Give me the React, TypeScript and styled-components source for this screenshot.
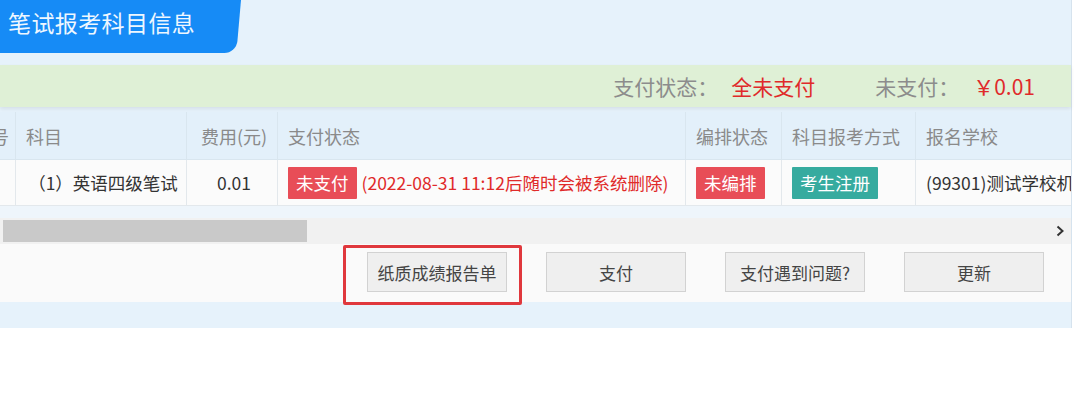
import React, { useLayoutEffect, useRef } from 'react';
import styled, { createGlobalStyle } from 'styled-components';

const GlobalStyle = createGlobalStyle`
  html, body {
    margin: 0;
    padding: 0;
    background: #ffffff;
  }
  body {
    font-family: "Noto Sans CJK SC", "Noto Sans", "Liberation Sans", sans-serif;
  }
`;

const Panel = styled.div`
  width: 1071px;
  background: #e6f2fb;
  border-right: 1px solid #d6e3ee;
  display: flex;
  flex-direction: column;
`;

const TabRow = styled.div`
  height: 65px;
  display: flex;
  align-items: flex-start;
`;

const Tab = styled.div`
  position: relative;
  z-index: 0;
  width: 241px;
  height: 53px;
  color: #eef7ff;
  font-size: 23px;
  line-height: 45px;
  padding-left: 8px;
  box-sizing: border-box;
  letter-spacing: 0.4px;

  &::before {
    content: '';
    position: absolute;
    top: 0;
    bottom: 0;
    left: -20px;
    right: 0;
    background: #168bf6;
    border-bottom-right-radius: 12px;
    transform-origin: top left;
    transform: skewX(-5deg);
    z-index: -1;
  }
`;

const PayBar = styled.div`
  height: 42px;
  background: #dff0d6;
  box-shadow: 0 2px 4px rgba(0, 0, 0, 0.08);
  display: flex;
  align-items: center;
  justify-content: flex-end;
  padding-right: 36px;
  font-size: 21px;
  position: relative;
`;

const BarLabel = styled.span<{ $gap?: number }>`
  color: #8c8c8c;
  margin-left: ${p => p.$gap ?? 0}px;
`;

const BarValue = styled.span<{ $gap?: number }>`
  color: #e02a2a;
  margin-left: ${p => p.$gap ?? 0}px;
`;

const TableWrap = styled.div`
  margin-top: 5px;
  overflow: hidden;
  width: 1071px;
`;

const Table = styled.table`
  border-collapse: collapse;
  table-layout: fixed;
  width: 1149px;
`;

const HeadCell = styled.th<{ $align?: string; $tight?: boolean }>`
  height: 47px;
  background: #e3f0fa;
  color: #8a8a8a;
  font-weight: normal;
  font-size: 18px;
  text-align: ${p => p.$align ?? 'left'};
  padding: ${p => (p.$tight ? '0' : '0 6px 0 10px')};
  border: 1px solid #d9e6ef;
  border-top: none;
  white-space: nowrap;
  overflow: hidden;
`;

const Cell = styled.td<{ $align?: string; $tight?: boolean }>`
  height: 45px;
  background: #fbfbfb;
  color: #333333;
  font-size: 17.5px;
  text-align: ${p => p.$align ?? 'left'};
  padding: ${p => (p.$tight ? '0' : '0 6px 0 10px')};
  border: 1px solid #e3e8ec;
  white-space: nowrap;
  overflow: hidden;
`;

const Badge = styled.span<{ $tone: 'red' | 'teal' }>`
  display: inline-block;
  vertical-align: middle;
  height: 32px;
  line-height: 32px;
  padding: 0 8px;
  color: #ffffff;
  font-size: 17.5px;
  background: ${p => (p.$tone === 'red' ? '#e84d57' : '#36ab9f')};
  border-radius: 1px;
`;

const Warn = styled.span`
  color: #e02a2a;
  font-size: 17.5px;
  margin-left: 5px;
  vertical-align: middle;
`;

const Gap = styled.div`
  height: 12px;
  background: #eef5fb;
`;

const ScrollTrack = styled.div`
  height: 26px;
  background: #f1f1f1;
  display: flex;
  align-items: center;
  padding-left: 3px;
  padding-right: 6px;
`;

const ScrollThumb = styled.div`
  width: 304px;
  height: 22px;
  background: #c9c9c9;
`;

const ScrollArrow = styled.div`
  margin-left: auto;
  display: flex;
  align-items: center;
`;

const ButtonRow = styled.div`
  height: 58px;
  background: #fafafa;
  display: flex;
  justify-content: flex-end;
  align-items: flex-start;
  padding: 8px 27px 0 0;
  box-sizing: border-box;
  gap: 39px;
`;

const Button = styled.button`
  width: 140px;
  height: 40px;
  background: #efefef;
  border: 1px solid #d2d2d2;
  color: #444444;
  font-family: inherit;
  font-size: 17px;
  padding: 0;
  cursor: pointer;
`;

const Marked = styled.div`
  position: relative;
  display: flex;

  &::after {
    content: '';
    position: absolute;
    left: -24px;
    right: -15px;
    top: -7px;
    bottom: -13px;
    border: 3px solid #e0383d;
    border-radius: 2px;
    pointer-events: none;
  }
`;

const Strip = styled.div`
  height: 26px;
  background: #e6f2fb;
`;

const columns = [
  { key: 'no', title: '序号', width: 49, align: 'center', tight: true },
  { key: 'subject', title: '科目', width: 171, align: 'left' },
  { key: 'fee', title: '费用(元)', width: 91, align: 'center' },
  { key: 'pay', title: '支付状态', width: 408, align: 'left' },
  { key: 'arrange', title: '编排状态', width: 96, align: 'left' },
  { key: 'mode', title: '科目报考方式', width: 134, align: 'left' },
  { key: 'school', title: '报名学校', width: 200, align: 'left' },
];

const App: React.FC = () => {
  const wrapRef = useRef<HTMLDivElement>(null);

  useLayoutEffect(() => {
    if (wrapRef.current) wrapRef.current.scrollLeft = 34;
  }, []);

  return (
    <>
      <GlobalStyle />
      <Panel>
        <TabRow>
          <Tab>笔试报考科目信息</Tab>
        </TabRow>

        <PayBar>
          <BarLabel>支付状态：</BarLabel>
          <BarValue $gap={13}>全未支付</BarValue>
          <BarLabel $gap={60}>未支付：</BarLabel>
          <BarValue $gap={14}>￥0.01</BarValue>
        </PayBar>

        <TableWrap ref={wrapRef}>
          <Table>
            <colgroup>
              {columns.map(c => (
                <col key={c.key} style={{ width: c.width }} />
              ))}
            </colgroup>
            <thead>
              <tr>
                {columns.map(c => (
                  <HeadCell key={c.key} $align={c.align} $tight={c.tight}>
                    {c.title}
                  </HeadCell>
                ))}
              </tr>
            </thead>
            <tbody>
              <tr>
                <Cell $align="center" $tight>1</Cell>
                <Cell $align="center">（1）英语四级笔试</Cell>
                <Cell $align="center">0.01</Cell>
                <Cell>
                  <Badge $tone="red">未支付</Badge>
                  <Warn>(2022-08-31 11:12后随时会被系统删除)</Warn>
                </Cell>
                <Cell>
                  <Badge $tone="red">未编排</Badge>
                </Cell>
                <Cell>
                  <Badge $tone="teal">考生注册</Badge>
                </Cell>
                <Cell>(99301)测试学校机构</Cell>
              </tr>
            </tbody>
          </Table>
        </TableWrap>

        <Gap />

        <ScrollTrack>
          <ScrollThumb />
          <ScrollArrow>
            <svg width="10" height="12" viewBox="0 0 10 12">
              <path d="M2.5 1.5 L7.5 6 L2.5 10.5" fill="none" stroke="#333" strokeWidth="2" />
            </svg>
          </ScrollArrow>
        </ScrollTrack>

        <ButtonRow>
          <Marked>
            <Button>纸质成绩报告单</Button>
          </Marked>
          <Button>支付</Button>
          <Button>支付遇到问题?</Button>
          <Button>更新</Button>
        </ButtonRow>

        <Strip />
      </Panel>
    </>
  );
};

export default App;
